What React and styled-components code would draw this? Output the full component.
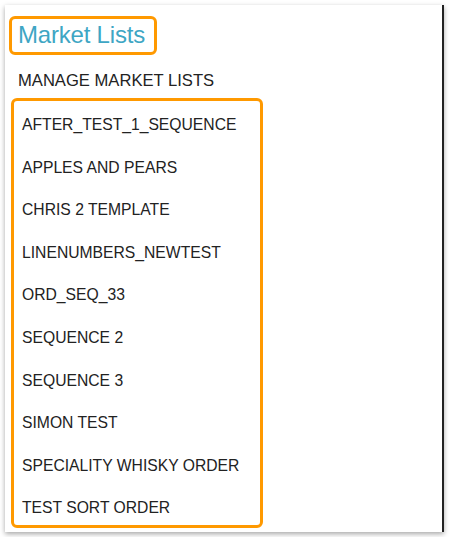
import React from 'react'
import styled, { createGlobalStyle } from 'styled-components'

const GlobalStyle = createGlobalStyle`
  body {
    margin: 0;
    background: #fff;
    font-family: 'Liberation Sans', Arial, sans-serif;
  }
`

const Panel = styled.div`
  margin: 5px;
  width: 439px;
  height: 527px;
  box-sizing: border-box;
  background: #fff;
  border-right: 2px solid #222;
  box-shadow: 0 2px 5px rgba(0, 0, 0, 0.35);
  padding: 11px 0 0 4px;
`

const TitleBox = styled.div`
  display: inline-block;
  border: 3px solid #ff9900;
  border-radius: 6px;
  padding: 1px 9px 2px 6px;
`

const Title = styled.h1`
  margin: 0;
  font-family: 'Liberation Sans', Arial, sans-serif;
  font-weight: 300;
  font-size: 24px;
  letter-spacing: -0.2px;
  line-height: 30px;
  color: #3ea6c4;
`

const Subtitle = styled.div`
  margin: 16px 0 0 9px;
  font-size: 16.6px;
  line-height: 20px;
  color: #222;
`

const ListBox = styled.ul`
  list-style: none;
  margin: 7px 0 0 2px;
  padding: 3px 0 0 8px;
  width: 252px;
  height: 430px;
  box-sizing: border-box;
  border: 3px solid #ff9900;
  border-radius: 6px;
`

const Item = styled.li`
  font-size: 15.7px;
  line-height: 42.6px;
  color: #222;
`

const lists = [
  'AFTER_TEST_1_SEQUENCE',
  'APPLES AND PEARS',
  'CHRIS 2 TEMPLATE',
  'LINENUMBERS_NEWTEST',
  'ORD_SEQ_33',
  'SEQUENCE 2',
  'SEQUENCE 3',
  'SIMON TEST',
  'SPECIALITY WHISKY ORDER',
  'TEST SORT ORDER',
]

export default function App() {
  return (
    <>
      <GlobalStyle />
      <Panel>
        <TitleBox>
          <Title>Market Lists</Title>
        </TitleBox>
        <Subtitle>MANAGE MARKET LISTS</Subtitle>
        <ListBox>
          {lists.map(name => (
            <Item key={name}>{name}</Item>
          ))}
        </ListBox>
      </Panel>
    </>
  )
}
